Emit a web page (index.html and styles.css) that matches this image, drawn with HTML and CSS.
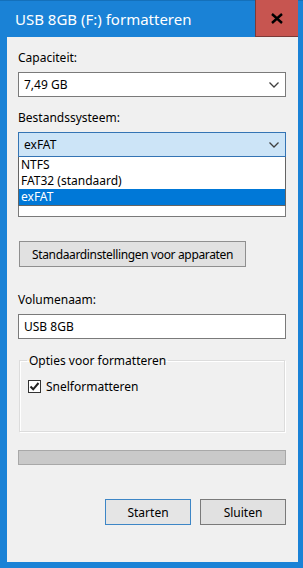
FILE: index.html
```html
<!DOCTYPE html>
<html lang="nl">
<head>
    <meta charset="UTF-8">
    <meta name="viewport" content="width=device-width, initial-scale=1.0">
    <title>USB 8GB (F:) formatteren</title>
    <link rel="stylesheet" href="styles.css">
</head>
<body>
    <div class="window">
        <div class="titlebar">
            <span class="title">USB 8GB (F:) formatteren</span>
            <div class="close">
                <svg width="12" height="11" viewBox="0 0 12 11">
                    <path d="M1 1 L11 10 M11 1 L1 10" stroke="#000" stroke-width="2.4" fill="none"/>
                </svg>
            </div>
        </div>
        <div class="client">
            <div class="field-label">Capaciteit:</div>
            <div class="combo">
                <span>7,49 GB</span>
                <svg class="chevron" width="10" height="6" viewBox="0 0 10 6"><path d="M0.5 0.5 L5 5 L9.5 0.5" stroke="#404040" stroke-width="1.3" fill="none"/></svg>
            </div>

            <div class="field-label">Bestandssysteem:</div>
            <div class="combo-wrap">
                <div class="combo focused">
                    <span>exFAT</span>
                    <svg class="chevron" width="10" height="6" viewBox="0 0 10 6"><path d="M0.5 0.5 L5 5 L9.5 0.5" stroke="#404040" stroke-width="1.3" fill="none"/></svg>
                </div>
                <ul class="droplist">
                    <li>NTFS</li>
                    <li>FAT32 (standaard)</li>
                    <li class="selected">exFAT</li>
                </ul>
            </div>

            <!-- label and combo for unit size sit under the open list -->
            <div class="field-label"></div>
            <div class="combo"></div>

            <button class="btn btn-defaults">Standaardinstellingen voor apparaten</button>

            <div class="field-label">Volumenaam:</div>
            <div class="textbox">USB 8GB</div>

            <fieldset class="group">
                <legend>Opties voor formatteren</legend>
                <label class="check">
                    <span class="box">
                        <svg width="11" height="11" viewBox="0 0 11 11"><path d="M1.5 5.5 L4.2 8.3 L9.5 2" stroke="#222" stroke-width="2" fill="none"/></svg>
                    </span>
                    Snelformatteren
                </label>
            </fieldset>

            <div class="progress"></div>

            <div class="actions">
                <button class="btn btn-default">Starten</button>
                <button class="btn">Sluiten</button>
            </div>
        </div>
    </div>
</body>
</html>
```

FILE: styles.css
```css
body {
    margin: 0;
    font-family: "Noto Sans", Arial, sans-serif;
    font-size: 12px;
    color: #000;
    background: #1a82d6;
}
.window {
    width: 303px;
    height: 568px;
    box-sizing: border-box;
    background: #1a82d6;
    border-top: 1px solid #1470ba;
    padding: 0 5px 6px 7px;
    display: flex;
    flex-direction: column;
}
.titlebar {
    height: 36px;
    display: flex;
    align-items: center;
    margin-left: -7px;
    padding-left: 15px;
}
.title {
    flex: 1;
    color: #fff;
    font-size: 15px;
    margin-top: -1px;
}
.close {
    width: 42px;
    height: 36px;
    margin-top: -1px;
    background: #c75550;
    border-left: 1px solid #7b3a38;
    border-bottom: 1px solid #7b3a38;
    display: flex;
    align-items: center;
    justify-content: center;
}
.client {
    flex: 1;
    background: #f0f0f0;
    padding: 13px 12px 0 11px;
}
.field-label {
    line-height: 16px;
    height: 16px;
    margin-bottom: 6px;
}
.combo, .textbox {
    height: 25px;
    box-sizing: border-box;
    border: 1px solid #7a7a7a;
    background: #fff;
    display: flex;
    align-items: center;
    justify-content: space-between;
    padding: 0 6px 0 5px;
    margin-bottom: 13px;
}
.combo.focused {
    background: #cce4f7;
    border-color: #3474b4;
}
.combo-wrap {
    position: relative;
}
.droplist {
    position: absolute;
    top: 25px;
    left: 0;
    right: 0;
    margin: 0;
    padding: 0;
    list-style: none;
    background: #fff;
    border: 1px solid #646464;
    border-top: none;
    z-index: 2;
}
.droplist li {
    height: 16px;
    line-height: 16px;
    padding-left: 2px;
}
.droplist .selected {
    background: #0078d7;
    color: #fff;
}
.btn {
    font-family: inherit;
    font-size: 12px;
    height: 26px;
    box-sizing: border-box;
    background: #e1e1e1;
    border: 1px solid #adadad;
    padding: 0 5px;
    color: #000;
    white-space: nowrap;
}
.btn-defaults {
    display: block;
    margin: 24px 0 25px 1px;
    width: 227px;
    letter-spacing: -0.35px;
    border-color: #8f8f8f;
}
.textbox {
    justify-content: flex-start;
    margin-bottom: 13px;
}
.group {
    margin: 0 1px;
    padding: 9px 8px 0 8px;
    height: 80px;
    box-sizing: border-box;
    border: 1px solid #dcdcdc;
    box-shadow: inset 1px 1px 0 #fff, 1px 1px 0 #fff;
}
.group legend {
    padding: 0 2px;
    margin-left: -1px;
}
.check {
    display: flex;
    align-items: center;
    gap: 5px;
}
.box {
    width: 13px;
    height: 13px;
    box-sizing: border-box;
    border: 1px solid #333;
    background: #fff;
    display: flex;
    align-items: center;
    justify-content: center;
}
.progress {
    margin-top: 18px;
    height: 15px;
    box-sizing: border-box;
    background: #c9c9c9;
    border: 1px solid #a8a8a8;
}
.actions {
    display: flex;
    justify-content: flex-end;
    gap: 9px;
    margin-top: 34px;
}
.actions .btn {
    width: 86px;
    height: 26px;
    border-color: #7a7a7a;
}
.actions .btn-default {
    border-color: #3d86c6;
    background: #e5e5e5;
}
```
